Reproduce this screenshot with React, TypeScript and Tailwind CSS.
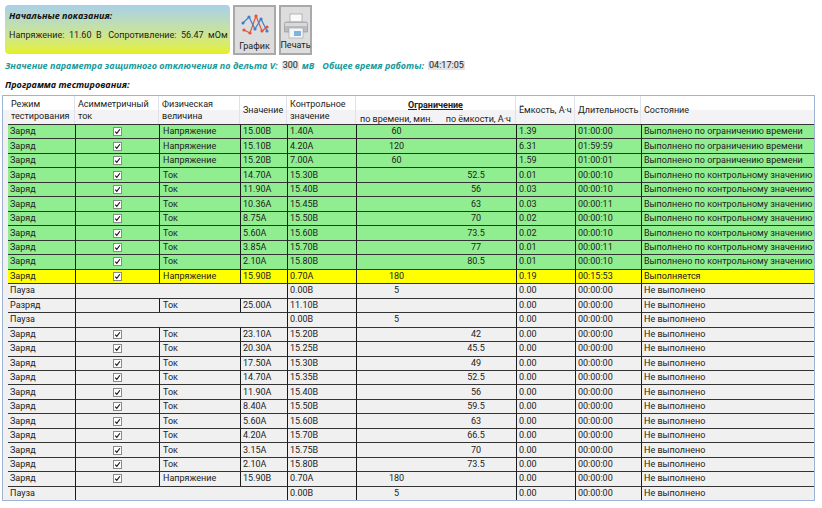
const cols = "grid grid-cols-[5px_67px_84px_81px_47px_69px_80px_80px_59px_66px_1fr]";
const line = "border-l border-[#1a1a1a]";

type R = { m: string; c?: boolean; p?: string; v?: string; k: string; t?: string; e?: string; cap: string; d: string; s: string; bg: string };

const G = "bg-[#90ee90]";
const Y = "bg-[#ffff00]";
const N = "bg-[#f0f0f0]";
const pt = "Выполнено по ограничению времени";
const ct = "Выполнено по контрольному значению";
const nt = "Не выполнено";

const rows: R[] = [
  { m: "Заряд", c: true, p: "Напряжение", v: "15.00В", k: "1.40А", t: "60", cap: "1.39", d: "01:00:00", s: pt, bg: G },
  { m: "Заряд", c: true, p: "Напряжение", v: "15.10В", k: "4.20А", t: "120", cap: "6.31", d: "01:59:59", s: pt, bg: G },
  { m: "Заряд", c: true, p: "Напряжение", v: "15.20В", k: "7.00А", t: "60", cap: "1.59", d: "01:00:01", s: pt, bg: G },
  { m: "Заряд", c: true, p: "Ток", v: "14.70А", k: "15.30В", e: "52.5", cap: "0.01", d: "00:00:10", s: ct, bg: G },
  { m: "Заряд", c: true, p: "Ток", v: "11.90А", k: "15.40В", e: "56", cap: "0.03", d: "00:00:10", s: ct, bg: G },
  { m: "Заряд", c: true, p: "Ток", v: "10.36А", k: "15.45В", e: "63", cap: "0.03", d: "00:00:11", s: ct, bg: G },
  { m: "Заряд", c: true, p: "Ток", v: "8.75А", k: "15.50В", e: "70", cap: "0.02", d: "00:00:10", s: ct, bg: G },
  { m: "Заряд", c: true, p: "Ток", v: "5.60А", k: "15.60В", e: "73.5", cap: "0.02", d: "00:00:10", s: ct, bg: G },
  { m: "Заряд", c: true, p: "Ток", v: "3.85А", k: "15.70В", e: "77", cap: "0.01", d: "00:00:11", s: ct, bg: G },
  { m: "Заряд", c: true, p: "Ток", v: "2.10А", k: "15.80В", e: "80.5", cap: "0.01", d: "00:00:10", s: ct, bg: G },
  { m: "Заряд", c: true, p: "Напряжение", v: "15.90В", k: "0.70А", t: "180", cap: "0.19", d: "00:15:53", s: "Выполняется", bg: Y },
  { m: "Пауза", k: "0.00В", t: "5", cap: "0.00", d: "00:00:00", s: nt, bg: N },
  { m: "Разряд", p: "Ток", v: "25.00А", k: "11.10В", cap: "0.00", d: "00:00:00", s: nt, bg: N },
  { m: "Пауза", k: "0.00В", t: "5", cap: "0.00", d: "00:00:00", s: nt, bg: N },
  { m: "Заряд", c: true, p: "Ток", v: "23.10А", k: "15.20В", e: "42", cap: "0.00", d: "00:00:00", s: nt, bg: N },
  { m: "Заряд", c: true, p: "Ток", v: "20.30А", k: "15.25В", e: "45.5", cap: "0.00", d: "00:00:00", s: nt, bg: N },
  { m: "Заряд", c: true, p: "Ток", v: "17.50А", k: "15.30В", e: "49", cap: "0.00", d: "00:00:00", s: nt, bg: N },
  { m: "Заряд", c: true, p: "Ток", v: "14.70А", k: "15.35В", e: "52.5", cap: "0.00", d: "00:00:00", s: nt, bg: N },
  { m: "Заряд", c: true, p: "Ток", v: "11.90А", k: "15.40В", e: "56", cap: "0.00", d: "00:00:00", s: nt, bg: N },
  { m: "Заряд", c: true, p: "Ток", v: "8.40А", k: "15.50В", e: "59.5", cap: "0.00", d: "00:00:00", s: nt, bg: N },
  { m: "Заряд", c: true, p: "Ток", v: "5.60А", k: "15.60В", e: "63", cap: "0.00", d: "00:00:00", s: nt, bg: N },
  { m: "Заряд", c: true, p: "Ток", v: "4.20А", k: "15.70В", e: "66.5", cap: "0.00", d: "00:00:00", s: nt, bg: N },
  { m: "Заряд", c: true, p: "Ток", v: "3.15А", k: "15.75В", e: "70", cap: "0.00", d: "00:00:00", s: nt, bg: N },
  { m: "Заряд", c: true, p: "Ток", v: "2.10А", k: "15.80В", e: "73.5", cap: "0.00", d: "00:00:00", s: nt, bg: N },
  { m: "Заряд", c: true, p: "Напряжение", v: "15.90В", k: "0.70А", t: "180", cap: "0.00", d: "00:00:00", s: nt, bg: N },
  { m: "Пауза", k: "0.00В", t: "5", cap: "0.00", d: "00:00:00", s: nt, bg: N },
];

function Check() {
  return (
    <span className="flex h-[9px] w-[9px] items-center justify-center border border-[#8a8a8a] bg-white">
      <svg viewBox="0 0 9 9" className="h-[9px] w-[9px]">
        <path d="M1.6 4.6 L3.6 6.8 L7.6 1.6" fill="none" stroke="#111" strokeWidth="1.4" />
      </svg>
    </span>
  );
}

function ChartIcon() {
  return (
    <svg viewBox="0 0 28 26" className="h-[26px] w-[28px]">
      <path d="M3 18 L9 21 L15 4 L21 19 L26 15" fill="none" stroke="#e0553a" strokeWidth="1.2" />
      <path d="M2 11 L8 5 L14 17 L20 7 L26 19" fill="none" stroke="#3f7fc8" strokeWidth="1.2" />
      {[[3, 18], [9, 21], [15, 4], [21, 19], [26, 15]].map(([x, y]) => (
        <circle key={`${x}-${y}`} cx={x} cy={y} r="1.6" fill="#e0553a" />
      ))}
      {[[2, 11], [8, 5], [14, 17], [20, 7], [26, 19]].map(([x, y]) => (
        <circle key={`${x}-${y}`} cx={x} cy={y} r="1.6" fill="#3f7fc8" />
      ))}
    </svg>
  );
}

function PrinterIcon() {
  return (
    <svg viewBox="0 0 24 26" className="h-[26px] w-[24px]">
      <rect x="6" y="1" width="12" height="8" fill="#fafafa" stroke="#a8a8a8" strokeWidth="0.8" />
      <path d="M2 9 H22 Q23.5 9 23.5 11 V19 H0.5 V11 Q0.5 9 2 9 Z" fill="#b9bcc0" stroke="#8f9396" strokeWidth="0.6" />
      <rect x="1" y="10" width="22" height="3" fill="#d7d9db" />
      <rect x="5" y="15" width="14" height="10" fill="#f4f6f8" stroke="#a8a8a8" strokeWidth="0.7" />
      <rect x="10" y="18" width="7" height="5" fill="#7fb2dc" />
    </svg>
  );
}

const bi = "font-bold italic [font-family:'Open_Sans',sans-serif]";

export default function App() {
  return (
    <div className="relative h-[508px] w-[822px] overflow-hidden bg-white text-[9px] leading-none text-[#222] [font-family:'Roboto','Noto_Sans',sans-serif]">
      <div className="flex pl-[5px] pt-[5px]">
        <div className="flex h-[49px] w-[225px] flex-col rounded-[4px] bg-gradient-to-b from-[#a8cfe8] to-[#e6f00a] pl-[4px]">
          <div className={`${bi} mt-[6px] text-[#111]`}>Начальные показания:</div>
          <div className="mt-[11px] whitespace-pre">Напряжение:  11.60  В   Сопротивление:  56.47  мОм</div>
        </div>
        <div className="ml-[3px] flex h-[50px] w-[43px] flex-col items-center border-2 border-[#a9a9a9] bg-[#dddddd]">
          <div className="mt-[5px]"><ChartIcon /></div>
          <div className="mt-[4px]">График</div>
        </div>
        <div className="ml-[3px] flex h-[50px] w-[33px] flex-col items-center border-2 border-[#a9a9a9] bg-[#dddddd]">
          <div className="mt-[6px]"><PrinterIcon /></div>
          <div className="mt-[2px]">Печать</div>
        </div>
      </div>

      <div className="ml-[5px] mt-[4px] flex h-[12px] items-center">
        <span className={`${bi} text-[#169a9a]`}>Значение параметра защитного отключения по дельта V:</span>
        <span className="ml-[4px] bg-[#e3e3e3] px-[1px]">300</span>
        <span className={`${bi} ml-[3px] text-[#169a9a]`}>мВ</span>
        <span className={`${bi} ml-[8px] text-[#169a9a]`}>Общее время работы:</span>
        <span className="ml-[4px] bg-[#e3e3e3] px-[1px]">04:17:05</span>
      </div>

      <div className={`${bi} ml-[5px] mt-[9px] h-[10px] text-[#111]`}>Программа тестирования:</div>

      <div className="ml-[2px] mt-[5px] w-[813px] border-x border-y border-[#9db4d4]">
        <div className={`${cols} h-[28px] items-stretch bg-gradient-to-b from-white from-50% to-[#f3f3f5] to-50%`}>
          <div />
          <div className="flex items-center border-r border-[#dfe2e8] pl-[3px] leading-[12px]"><span>Режим<br />тестирования</span></div>
          <div className="flex items-center border-r border-[#dfe2e8] pl-[3px] leading-[12px]"><span>Асимметричный<br />ток</span></div>
          <div className="flex items-center border-r border-[#dfe2e8] pl-[3px] leading-[12px]"><span>Физическая<br />величина</span></div>
          <div className="flex items-center border-r border-[#dfe2e8] pl-[3px]">Значение</div>
          <div className="flex items-center border-r border-[#dfe2e8] pl-[3px] leading-[12px]"><span>Контрольное<br />значение</span></div>
          <div className="col-span-2 flex flex-col border-r border-[#dfe2e8]">
            <div className="mt-[5px] text-center font-bold underline">Ограничение</div>
            <div className="mt-[5px] flex justify-between px-[4px]">
              <span>по времени, мин.</span>
              <span>по ёмкости, А·ч</span>
            </div>
          </div>
          <div className="flex items-center whitespace-nowrap border-r border-[#dfe2e8] pl-[3px]">Ёмкость, А·ч</div>
          <div className="flex items-center border-r border-[#dfe2e8] pl-[3px]">Длительность</div>
          <div className="flex items-center pl-[3px]">Состояние</div>
        </div>

        {rows.map((r, i) => (
          <div key={i} className={`${cols} h-[14.48px] items-stretch`}>
            <div className="bg-[#f0f0f0]" />
            <div className={`${r.bg} flex items-center border-t border-[#333] pl-[2px]`}>{r.m}</div>
            {r.p ? (
              <>
                <div className={`${r.bg} ${line} flex items-center justify-center border-t border-t-[#333]`}>
                  {r.c && <Check />}
                </div>
                <div className={`${r.bg} ${line} flex items-center border-t border-t-[#333] pl-[3px]`}>{r.p}</div>
                <div className={`${r.bg} ${line} flex items-center border-t border-t-[#333] pl-[2px]`}>{r.v}</div>
              </>
            ) : (
              <div className={`${r.bg} ${line} col-span-3 border-t border-t-[#333]`} />
            )}
            <div className={`${r.bg} ${line} flex items-center border-t border-t-[#333] pl-[2px]`}>{r.k}</div>
            <div className={`${r.bg} ${line} flex items-center justify-center border-t border-t-[#333]`}>{r.t}</div>
            <div className={`${r.bg} flex items-center justify-center border-t border-[#333]`}>{r.e}</div>
            <div className={`${r.bg} ${line} flex items-center border-t border-t-[#333] pl-[2px]`}>{r.cap}</div>
            <div className={`${r.bg} ${line} flex items-center border-t border-t-[#333] pl-[2px]`}>{r.d}</div>
            <div className={`${r.bg} ${line} flex items-center whitespace-nowrap border-t border-t-[#333] pl-[2px]`}>{r.s}</div>
          </div>
        ))}
      </div>
    </div>
  );
}
